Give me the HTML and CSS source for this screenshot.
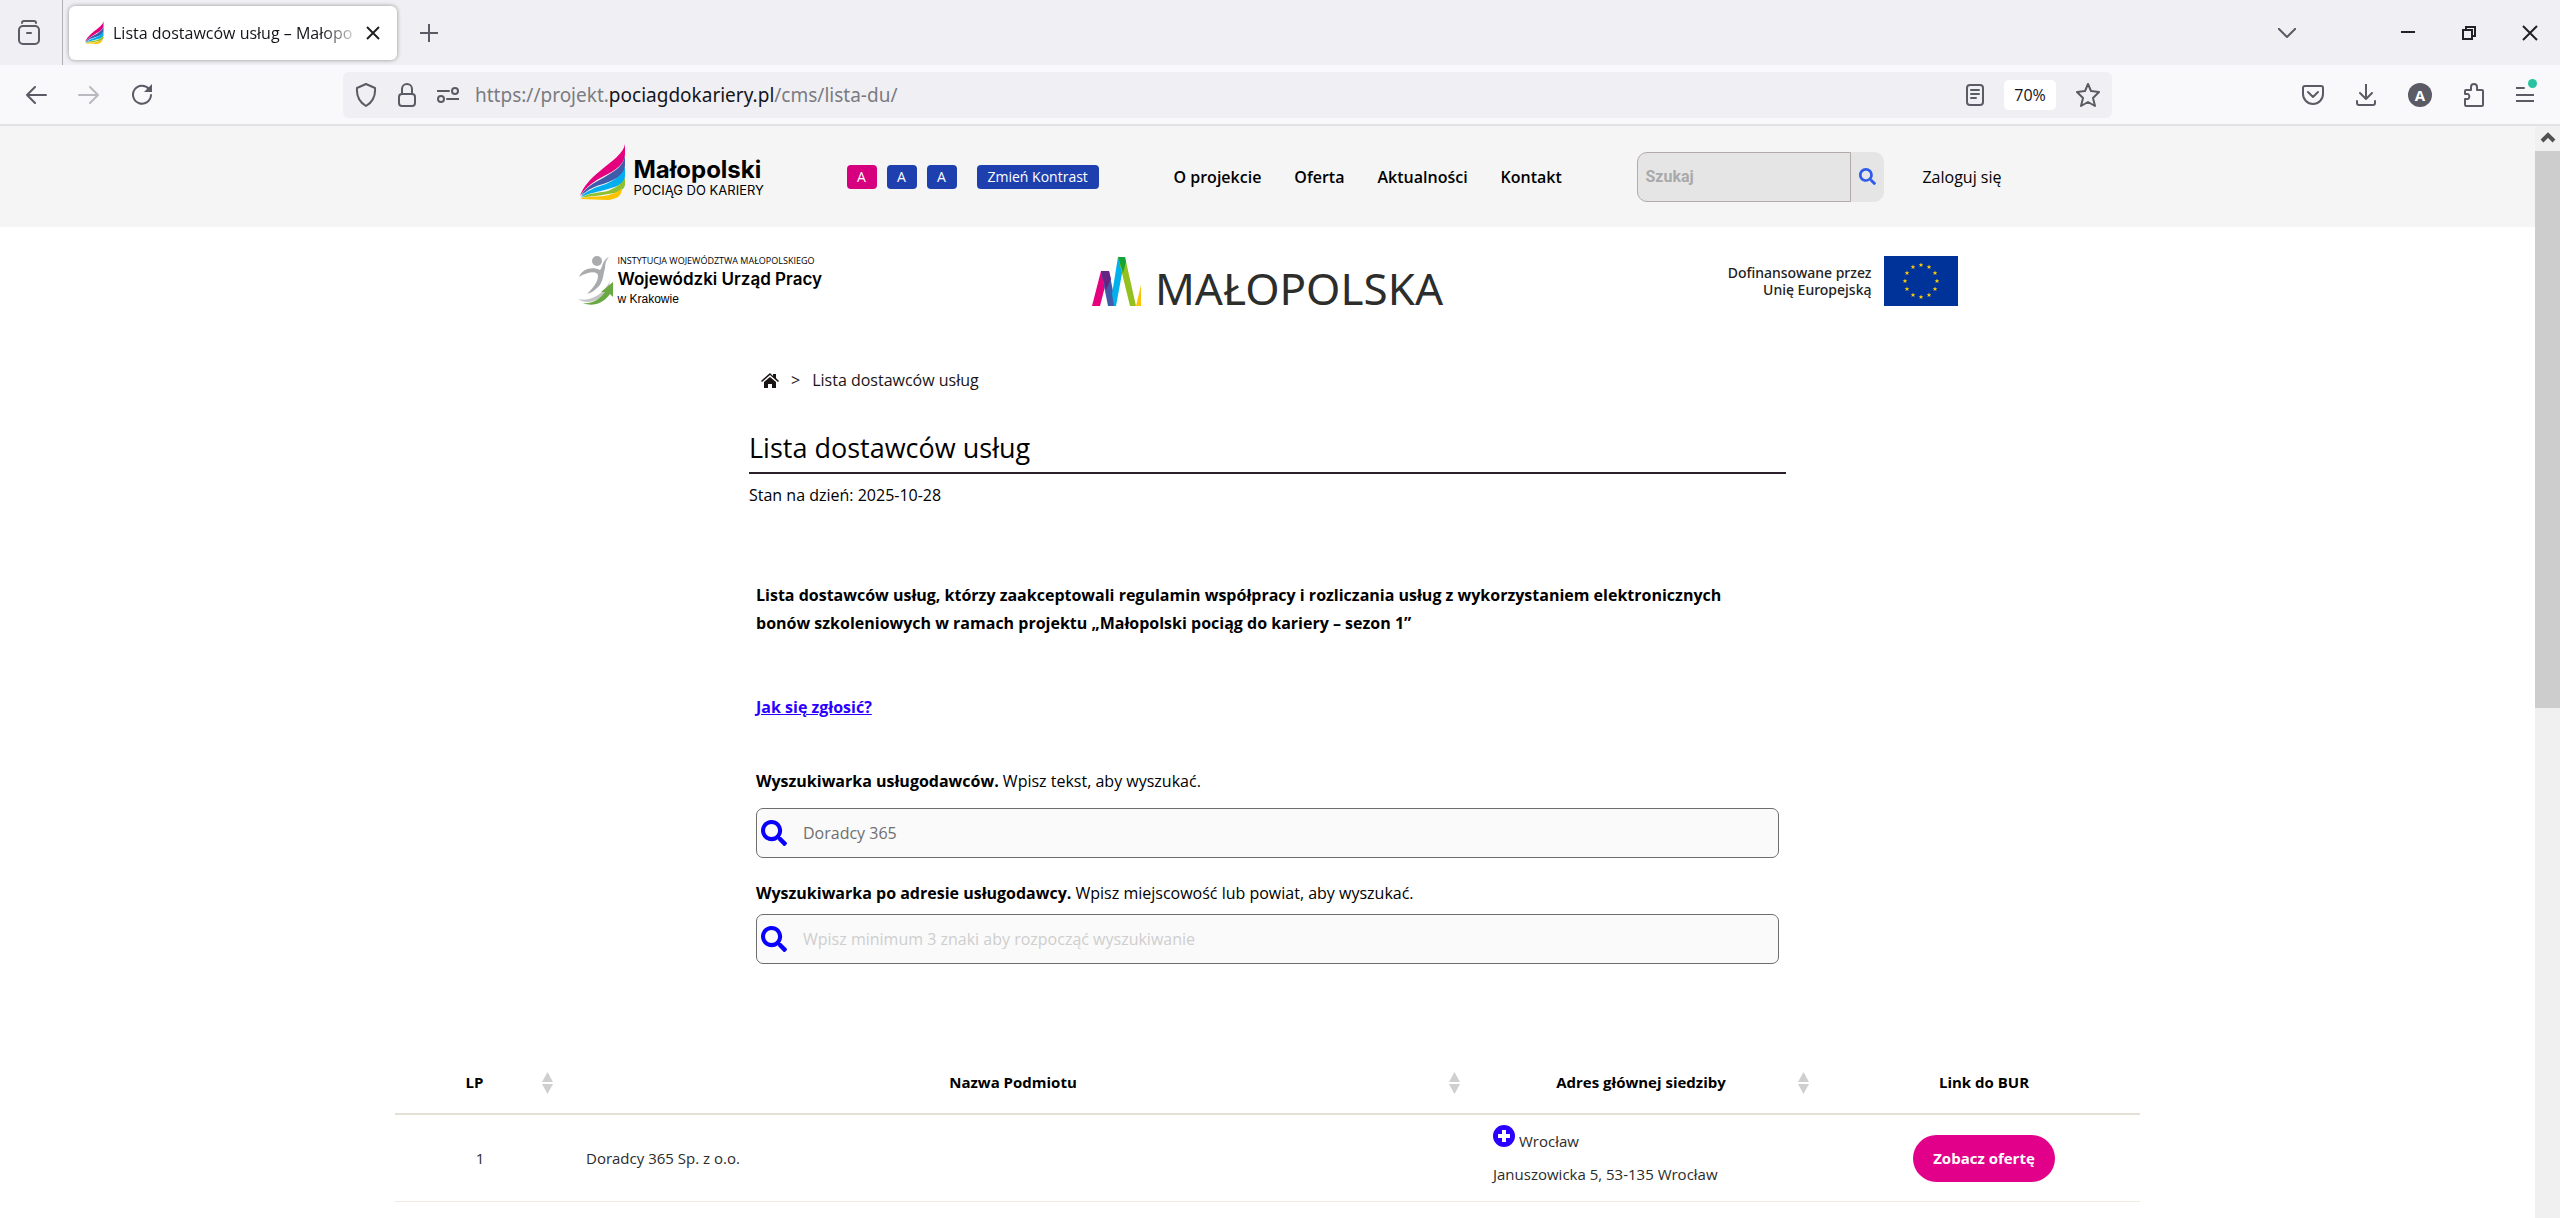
FILE: index.html
```html
<!DOCTYPE html>
<html lang="pl">
<head>
<meta charset="utf-8">
<title>Lista dostawców usług – Małopolski pociąg do kariery</title>
<link rel="stylesheet" href="styles.css">
</head>
<body>
<svg class="defs" aria-hidden="true">
  <symbol id="flame" viewBox="0 0 46 56">
    <path fill="#e5007d" d="M45 0C44 9 32 17 20 27 10 35 3 43 0 52 6 43 14 37 24 32 36 26 45 20 45 10Z"/>
    <path fill="#3f5ba9" d="M45 12C43 23 33 28 23 34 13 39 4 45 1 52 8 45 16 42 26 39 38 34 45 31 45 21Z"/>
    <path fill="#00aeef" d="M45 23C42 32 34 36 26 40 16 43 6 47 1 53 9 49 18 48 28 45 39 42 45 39 45 32Z"/>
    <path fill="#8fc02f" d="M45 34C42 40 35 44 28 47 18 49 8 49 1 54 10 52 18 52 28 50 38 49 44 46 45 41Z"/>
    <path fill="#fdc300" d="M42 44C37 49 30 51 24 52 15 53 7 52 0 55 10 55 18 56 28 56 37 55 42 52 42 44Z"/>
  </symbol>
  <symbol id="lens" viewBox="0 0 512 512">
    <path d="M505 442.700 405.300 343c-4.500-4.500-10.600-7-17-7H372c27.600-35.300 44-79.700 44-128C416 93.100 322.900 0 208 0S0 93.100 0 208s93.100 208 208 208c48.300 0 92.700-16.400 128-44v16.300c0 6.400 2.500 12.500 7 17l99.700 99.700c9.400 9.400 24.600 9.400 33.900 0l28.300-28.300c9.400-9.400 9.400-24.600.1-34zM208 336c-70.700 0-128-57.200-128-128 0-70.700 57.200-128 128-128 70.700 0 128 57.200 128 128 0 70.700-57.200 128-128 128z"/>
  </symbol>
  <symbol id="sort" viewBox="0 0 11 22">
    <path d="M5.500 0 11 10H0zM0 12h11L5.500 22z"/>
  </symbol>
</svg>

<div class="window">
  <div class="tabbar">
    <button class="icon recent" aria-label="Ostatnie karty">
      <svg width="26" height="26" viewBox="0 0 26 26"><path d="M6 3q0-2 2-2h10q2 0 2 2"/><rect x="3" y="6" width="20" height="18" rx="4"/><path d="M11 13h4"/></svg>
    </button>
    <div class="tab">
      <svg class="favicon" width="19" height="23"><use href="#flame"/></svg>
      <span class="tab-title">Lista dostawców usług – Małopo</span>
      <button class="icon" aria-label="Zamknij kartę"><svg class="dark" width="12" height="12" viewBox="0 0 12 12"><path d="M0 0 12 12M12 0 0 12"/></svg></button>
    </div>
    <button class="icon newtab" aria-label="Nowa karta"><svg width="18" height="18" viewBox="0 0 18 18"><path d="M9 0v18M0 9h18"/></svg></button>
    <div class="winctl">
      <button class="icon alltabs" aria-label="Lista kart"><svg width="18" height="10" viewBox="0 0 18 10"><path d="M0 0 9 9 18 0"/></svg></button>
      <button class="icon" aria-label="Minimalizuj"><svg class="dark" width="14" height="14" viewBox="0 0 14 14"><path d="M0 6h14"/></svg></button>
      <button class="icon" aria-label="Przywróć"><svg class="dark" width="14" height="14" viewBox="0 0 14 14"><path d="M1 4h9v9H1zM4 4V1h9v9h-3"/></svg></button>
      <button class="icon" aria-label="Zamknij"><svg class="dark" width="14" height="14" viewBox="0 0 14 14"><path d="M0 0 14 14M14 0 0 14"/></svg></button>
    </div>
  </div>

  <div class="toolbar">
    <div class="navbtns">
      <button class="icon" aria-label="Wstecz"><svg width="22" height="18" viewBox="0 0 22 18"><path d="M21 9H2M10 1 2 9l8 8"/></svg></button>
      <button class="icon off" aria-label="Dalej"><svg width="22" height="18" viewBox="0 0 22 18"><path d="M1 9h19M12 1l8 8-8 8"/></svg></button>
      <button class="icon" aria-label="Odśwież"><svg width="22" height="22" viewBox="0 0 22 22"><path d="M18 5a9 9 0 1 0 2 6"/><path class="solid" d="M21 0v8h-8z"/></svg></button>
    </div>
    <div class="urlbar">
      <svg width="22" height="24" viewBox="0 0 22 24"><path d="M11 1 20 5q1 12-9 18Q1 17 2 5z"/></svg>
      <svg width="20" height="24" viewBox="0 0 20 24"><rect x="2" y="11" width="16" height="12" rx="3"/><path d="M5 11V6a5 5 0 0 1 10 0v5"/></svg>
      <svg width="22" height="16" viewBox="0 0 22 16"><path d="M0 4h12M10 12h12"/><circle cx="18" cy="4" r="3"/><circle cx="4" cy="12" r="3"/></svg>
      <div class="url">https://projekt.<b>pociagdokariery.pl</b>/cms/lista-du/</div>
      <button class="icon" aria-label="Tryb czytania"><svg width="18" height="22" viewBox="0 0 18 22"><rect x="1" y="1" width="16" height="20" rx="3"/><path d="M5 6h8M5 10h8M5 14h5"/></svg></button>
      <button class="zoom">70%</button>
      <button class="icon" aria-label="Dodaj zakładkę"><svg width="24" height="24" viewBox="0 0 24 24"><path d="m12 1 3 7 8 1-6 6 2 8-7-4-7 4 2-8-6-6 8-1z"/></svg></button>
    </div>
    <div class="tools">
      <button class="icon" aria-label="Pocket"><svg width="22" height="20" viewBox="0 0 22 20"><path d="M3 1h16q2 0 2 2v6a10 10 0 0 1-20 0V3q0-2 2-2zM6 7l5 5 5-5"/></svg></button>
      <button class="icon" aria-label="Pobrane pliki"><svg width="20" height="22" viewBox="0 0 20 22"><path d="M10 0v15M4 9l6 6 6-6M1 17v2q0 2 2 2h14q2 0 2-2v-2"/></svg></button>
      <button class="account">A</button>
      <button class="icon" aria-label="Rozszerzenia"><svg width="20" height="24" viewBox="0 0 20 24"><path d="M1 21v-5h3a3 3 0 0 0 0-5H1V8q0-1 1-1h5V4a3 3 0 0 1 6 0v3h5q1 0 1 1v14q0 1-1 1H2q-1 0-1-2z"/></svg></button>
      <button class="icon menu" aria-label="Menu"><svg width="18" height="16" viewBox="0 0 18 16"><path d="M0 1h8M0 8h18M0 14h18"/></svg></button>
    </div>
  </div>

  <div class="viewport">
    <div class="page">
      <header class="site-header">
        <div class="header-in">
          <a class="brand" href="#">
            <svg width="46" height="56"><use href="#flame"/></svg>
            <span class="brand-text"><strong>Małopolski</strong><span>POCIĄG DO KARIERY</span></span>
          </a>
          <div class="a11y">
            <button class="chip on">A</button><button class="chip">A</button><button class="chip">A</button>
            <button class="chip wide">Zmień Kontrast</button>
          </div>
          <nav class="nav"><a href="#">O projekcie</a><a href="#">Oferta</a><a href="#">Aktualności</a><a href="#">Kontakt</a></nav>
          <form class="search">
            <input type="text" placeholder="Szukaj" aria-label="Szukaj"><button type="button" aria-label="Szukaj w serwisie"><svg width="17" height="17"><use href="#lens"/></svg></button>
          </form>
          <a class="login" href="#">Zaloguj się</a>
        </div>
      </header>

      <div class="partners">
        <div class="wup">
          <svg width="36" height="50" viewBox="0 0 36 50">
            <circle cx="19" cy="6" r="5" fill="#a9abad"/>
            <path fill="#a9abad" d="M31 2C26 7 28 12 26 17 25 23 24 29 19 33 15 37 12 38 9 39 15 33 20 27 20 21 20 16 11 16 1 22 4 14 14 11 22 15 25 12 24 5 31 2Z"/>
            <path fill="#c3c5c7" d="M32 26C28 34 22 40 14 43 9 45 5 45 0 44 6 48 14 48 22 43 28 38 31 33 32 26Z"/>
            <path fill="#6aa842" d="M35 27V42L32 39C25 49 14 52 5 48 15 49 22 44 27 37L23 37Z"/>
          </svg>
          <div class="wup-text"><span class="wup-top">INSTYTUCJA WOJEWÓDZTWA MAŁOPOLSKIEGO</span><strong>Wojewódzki Urząd Pracy</strong><span class="wup-city">w Krakowie</span></div>
        </div>
        <div class="region">
          <svg width="49" height="49" viewBox="0 0 49 49">
            <path fill="#e5007d" d="M0 49 9 14h8L8 49z"/>
            <path fill="#3f5ba9" d="M9 14h8l7 35h-8z"/>
            <path fill="#662483" d="M9 14h8l2 8-5 11z"/>
            <path fill="#00b1eb" d="M20 37 26 0h7l-9 49h-2z"/>
            <path fill="#95c11f" d="M26 0h7l11 49h-6z"/>
            <path fill="#13a538" d="M26 0h7l1 5-3 11z"/>
            <path fill="#fdc300" d="M44 49 49 28V49z"/>
          </svg>
          <span>MAŁOPOLSKA</span>
        </div>
        <div class="eu">
          <span>Dofinansowane przez<br>Unię Europejską</span>
          <svg width="74" height="50" viewBox="0 0 74 50">
            <defs><path id="star" fill="#ffcc00" d="M0-2.500.600-.800H2.400L1 .300 1.500 2 0 1-1.500 2-1 .300-2.400-.800H-.600Z"/></defs>
            <rect width="74" height="50" fill="#039"/>
            <use href="#star" x="37" y="9"/><use href="#star" x="45" y="11"/><use href="#star" x="51" y="17"/><use href="#star" x="53" y="25"/><use href="#star" x="51" y="33"/><use href="#star" x="45" y="39"/><use href="#star" x="37" y="41"/><use href="#star" x="29" y="39"/><use href="#star" x="23" y="33"/><use href="#star" x="21" y="25"/><use href="#star" x="23" y="17"/><use href="#star" x="29" y="11"/>
          </svg>
        </div>
      </div>

      <main>
        <div class="column">
          <nav class="crumbs" aria-label="Okruszki">
            <a href="#" aria-label="Strona główna"><svg width="18" height="15" viewBox="0 0 18 15"><path fill="#1a1414" d="M9 0 12 3V1h3v4l3 3-1 1-8-7-8 7-1-1zM9 4l6 5v6h-4v-4H7v4H3V9z"/></svg></a>
            <span>&gt;</span><span>Lista dostawców usług</span>
          </nav>
          <h1>Lista dostawców usług</h1>
          <p class="asof">Stan na dzień: 2025-10-28</p>
          <div class="content">
            <p class="lead">Lista dostawców usług, którzy zaakceptowali regulamin współpracy i rozliczania usług z wykorzystaniem elektronicznych bonów szkoleniowych w ramach projektu „Małopolski pociąg do kariery – sezon 1”</p>
            <p class="how"><a href="#">Jak się zgłosić?</a></p>
            <label for="q-name"><strong>Wyszukiwarka usługodawców.</strong> Wpisz tekst, aby wyszukać.</label>
            <div class="field"><svg width="26" height="26"><use href="#lens"/></svg><input id="q-name" type="text" value="Doradcy 365"></div>
            <label for="q-addr"><strong>Wyszukiwarka po adresie usługodawcy.</strong> Wpisz miejscowość lub powiat, aby wyszukać.</label>
            <div class="field second"><svg width="26" height="26"><use href="#lens"/></svg><input id="q-addr" type="text" placeholder="Wpisz minimum 3 znaki aby rozpocząć wyszukiwanie"></div>
          </div>
        </div>

        <table class="providers">
          <colgroup><col class="c-no"><col class="c-name"><col class="c-addr"><col class="c-link"></colgroup>
          <thead><tr>
            <th><div class="th">LP<svg width="11" height="22"><use href="#sort"/></svg></div></th>
            <th><div class="th">Nazwa Podmiotu<svg width="11" height="22"><use href="#sort"/></svg></div></th>
            <th><div class="th">Adres głównej siedziby<svg width="11" height="22"><use href="#sort"/></svg></div></th>
            <th class="link">Link do BUR</th>
          </tr></thead>
          <tbody><tr>
            <td class="no">1</td>
            <td>Doradcy 365 Sp. z o.o.</td>
            <td><button class="more" aria-label="Rozwiń"><svg width="22" height="22" viewBox="0 0 22 22"><circle cx="11" cy="11" r="11" fill="#2a00ff"/><path d="M11 5v12M5 11h12" stroke="#fff" stroke-width="4"/></svg></button>Wrocław<br>Januszowicka 5, 53-135 Wrocław</td>
            <td class="link"><a class="offer" href="#">Zobacz ofertę</a></td>
          </tr></tbody>
        </table>
      </main>
    </div>
    <div class="scrollbar"><svg width="25" height="25" viewBox="0 0 25 25"><path d="M7 15l6-6 6 6"/></svg><div class="thumb"></div></div>
  </div>
</div>
</body>
</html>
```
FILE: styles.css
```css
* { box-sizing: border-box; }
body, h1, p { margin: 0; }
body { font: 16px/24px "Open Sans", "Noto Sans", sans-serif; color: #000; background: #fff; }
button { font: inherit; color: inherit; background: none; border: 0; padding: 0; }
a { color: inherit; text-decoration: none; }
svg { display: block; flex: none; }
.defs { position: absolute; width: 0; height: 0; }

.window { display: flex; flex-direction: column; height: 100vh; overflow: hidden; }

/* browser chrome */
.tabbar, .toolbar { flex: none; display: flex; align-items: center; }
.tabbar svg, .toolbar svg, .scrollbar svg { fill: none; stroke: #5b5b66; stroke-width: 2; stroke-linejoin: round; stroke-linecap: round; }
.tabbar svg.favicon { stroke: none; }
.tabbar svg.dark { stroke: #222; overflow: visible; stroke-linecap: butt; stroke-linejoin: miter; }
.toolbar svg .solid { fill: #5b5b66; stroke: none; }
.icon { display: flex; }
.tabbar { height: 65px; background: #f0f0f4; }
.recent { align-items: center; height: 100%; padding: 0 20px 0 16px; border-right: 1px solid #aeaeb4; margin-right: 6px; }
.tab { display: flex; align-items: center; width: 328px; height: 54px; padding: 0 18px 0 16px; background: #fff; border-radius: 6px; box-shadow: 0 0 4px rgba(0,0,0,.4); color: #15141a; }
.tab-title { flex: 1; min-width: 0; margin: 0 6px 0 9px; font-size: 16px; white-space: nowrap; overflow: hidden; mask-image: linear-gradient(to left, transparent, #000 40px); }
.newtab { margin-left: 23px; }
.winctl { display: flex; align-items: center; gap: 47px; margin-left: auto; padding-right: 23px; }
.alltabs { margin-right: 58px; }

.toolbar { height: 61px; background: #f9f9fb; border-bottom: 2px solid #e2e2e6; padding-right: 26px; }
.navbtns { display: flex; align-items: center; gap: 31px; padding-left: 25px; width: 343px; }
.off { opacity: .4; }
.urlbar { flex: 0 1 1769px; display: flex; align-items: center; gap: 20px; height: 46px; padding: 0 12px; background: #f0f0f4; border-radius: 6px; }
.url { flex: 1; font: 19px/24px "Noto Sans", sans-serif; color: #7b7b80; margin-left: -4px; }
.url b { font-weight: 400; color: #15141a; }
.zoom { width: 52px; height: 30px; background: #fff; border-radius: 5px; color: #15141a; }
.tools { display: flex; align-items: center; gap: 32px; margin-left: auto; }
.account { width: 24px; height: 24px; border-radius: 50%; background: #5b5b66; color: #fff; font-weight: 700; font-size: 15px; line-height: 24px; }
.menu { position: relative; }
.menu::after { content: ""; position: absolute; right: -3px; top: -8px; width: 9px; height: 9px; border-radius: 50%; background: #2ac3a2; }

.viewport { flex: 1; min-height: 0; display: flex; }
.page { flex: 1; min-width: 0; overflow: hidden; }
.scrollbar { flex: none; width: 25px; background: #f0f0f0; }
.scrollbar svg { stroke: #505050; stroke-width: 4; stroke-linecap: butt; stroke-linejoin: miter; }
.thumb { height: 51%; background: #cdcdcd; }

/* site header */
.site-header { background: #f5f5f5; }
.header-in { display: flex; align-items: center; max-width: 1468px; height: 101px; margin: 0 auto; padding-left: 46px; }
.brand { display: flex; align-items: center; gap: 8px; width: 267px; padding-bottom: 10px; }
.brand-text { display: flex; flex-direction: column; font-family: Inter, sans-serif; font-size: 13px; line-height: 16px; padding-top: 12px; }
.brand-text strong { font-size: 24px; line-height: 24px; }
.a11y { display: flex; gap: 10px; width: 327px; }
.chip { min-width: 30px; height: 24px; border-radius: 4px; background: #1e40af; color: #fff; font-size: 14px; line-height: 24px; }
.chip.on { background: #d6007f; }
.chip.wide { margin-left: 10px; padding: 0 11px; }
.nav { display: flex; gap: 33px; font-weight: 600; }
.search { display: flex; width: 247px; margin-left: auto; }
.search input { flex: 1; min-width: 0; height: 50px; padding: 0 7px; border: 1px solid #b5aaaa; border-radius: 10px 0 0 10px; background: #e5e5e5; font: 700 16px/24px Roboto, sans-serif; }
.search input::placeholder { color: #a9a9a9; opacity: 1; }
.search button { width: 33px; background: #e5e5e5; border-radius: 0 10px 10px 0; padding-left: 8px; }
.search svg { fill: #2f5be8; }
.login { margin-left: 38px; }

.partners { display: flex; align-items: center; justify-content: space-between; max-width: 1380px; margin: 0 auto; padding-top: 28px; }
.wup { display: flex; gap: 4px; flex: 1; }
.wup-text { display: flex; flex-direction: column; font: 12px/16px "Liberation Sans", sans-serif; }
.wup-text strong { font: 600 17px/24px Inter, sans-serif; }
.wup-top { font: 9px/12px "Open Sans", sans-serif; }
.region { display: flex; align-items: flex-end; gap: 14px; font: 44px/44px "Noto Sans", sans-serif; color: #2d2d2b; }
.region span { height: 40px; }
.eu { display: flex; align-items: center; justify-content: flex-end; gap: 12px; flex: 1; text-align: right; font: 500 14px/17px "Noto Sans", sans-serif; color: #222; }

/* content */
.column { max-width: 1037px; margin: 0 auto; padding-top: 61px; }
.crumbs { display: flex; align-items: center; gap: 12px; padding-left: 12px; color: #1a1414; }
h1 { margin-top: 38px; padding-bottom: 6px; border-bottom: 2px solid #2b1f2b; font-size: 27px; line-height: 36px; font-weight: 400; }
.asof { margin-top: 9px; }
.content { padding: 74px 7px 88px; line-height: 28px; }
.lead { padding-right: 24px; font-weight: 700; }
.how { margin: 56px 0 46px; font-weight: 700; }
.how a { color: #2a00ff; text-decoration: underline; }
label { display: block; }
.field { display: flex; align-items: center; gap: 8px; height: 50px; margin: 13px 0 21px; padding-left: 4px; border: 1px solid #6e6e6e; border-radius: 7px; background: #fafafa; }
.field.second { margin: 7px 0 0; }
.field svg { fill: #0a00ff; }
.field input { flex: 1; height: 100%; border: 0; background: none; padding: 0 8px; font: inherit; color: #6f6f6f; }
.field input::placeholder { color: #cecece; opacity: 1; }

.providers { width: 100%; max-width: 1745px; margin: 0 auto; border-collapse: collapse; table-layout: fixed; font-size: 15px; line-height: 33px; }
.c-no { width: 170px; }
.c-name { width: 907px; }
.c-addr { width: 349px; }
.providers th { height: 62px; padding: 0 12px; border-bottom: 2px solid #e4e0d6; }
.th { display: flex; align-items: center; justify-content: space-between; }
.th::before { content: ""; }
.th svg { fill: #cfcfcf; }
.providers td { padding: 10px 21px; border-bottom: 1px solid #f0ebdf; color: #2b2b2b; }
.providers .no { text-align: center; }
.providers .link { text-align: center; padding: 0 0 0 7px; }
.more { display: inline-block; vertical-align: 0; margin-right: 4px; }
.providers .offer { display: inline-block; height: 47px; padding: 0 20px; border-radius: 24px; background: #e2008a; color: #fff; font-weight: 700; line-height: 47px; }
```
